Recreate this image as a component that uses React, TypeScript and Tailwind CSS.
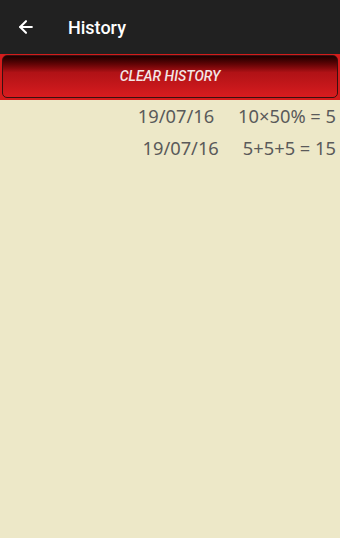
import { ArrowLeft } from "lucide-react";

const rows = [
  { date: "19/07/16", expr: "10×50% = 5" },
  { date: "19/07/16", expr: "5+5+5 = 15" },
];

export default function App() {
  return (
    <div className="flex h-[538px] w-[340px] flex-col bg-[#ede8c8] font-['Roboto',sans-serif]">
      <header className="flex h-[54px] items-center bg-[#212121] px-4">
        <ArrowLeft className="h-5 w-5 text-white" strokeWidth={2.5} />
        <h1 className="ml-[32px] text-[18px] font-medium text-white">History</h1>
      </header>
      <div className="bg-[#d41c1c] px-[2px] pt-[1px] pb-[2px]">
        <button className="flex h-[43px] w-full items-center justify-center rounded-[5px] border border-[#3a1010] bg-gradient-to-b from-[#1e0000] via-[#b01216] via-40% to-[#d81c1f] text-[14px] font-medium italic text-[#f3e6e6]">
          CLEAR HISTORY
        </button>
      </div>
      <ul className="flex flex-col pt-[-1px] font-['Noto_Sans',sans-serif] text-[18.3px] text-[#5a5a5a]">
        {rows.map((r, i) => (
          <li key={i} className="flex h-[31px] items-center justify-end gap-[24px] pr-[4px] first:h-[32px]">
            <span>{r.date}</span>
            <span>{r.expr}</span>
          </li>
        ))}
      </ul>
    </div>
  );
}
